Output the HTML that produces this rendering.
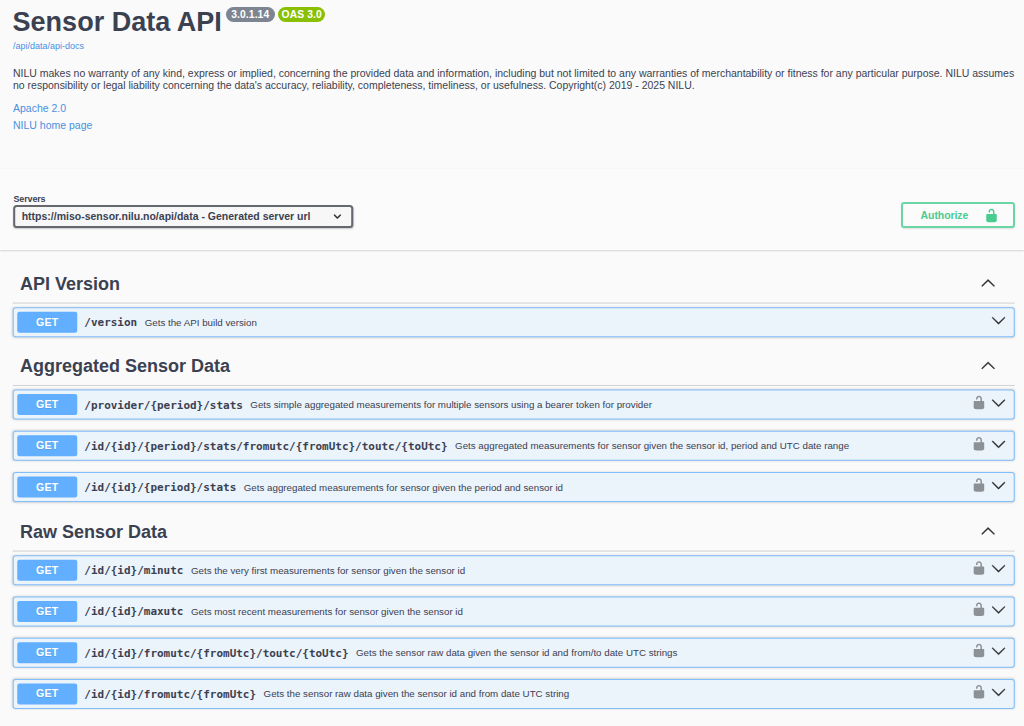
<!DOCTYPE html>
<html lang="en"><head><meta charset="utf-8"><title>Sensor Data API</title>
<style>
*{box-sizing:border-box}
html,body{margin:0;padding:0}
body{width:1024px;height:726px;overflow:hidden;background:#fafafa;font-family:"Liberation Sans",sans-serif;color:#3b4151;position:relative}
a{text-decoration:none;color:#4990e2}
.abs{position:absolute}
.t0{position:absolute;left:0;top:0}
.title{left:13px;top:8px;transform:translate(-.4px,-.6px);font-size:27px;font-weight:700;line-height:31px;margin:0;white-space:nowrap}
.badge{position:absolute;top:6.8px;height:14.8px;border-radius:8px;color:#fff;font-size:10.3px;font-weight:700;line-height:14.8px;padding-top:1px;letter-spacing:.1px;text-align:center;white-space:nowrap}
.badge.v{left:225.6px;width:49.3px;background:#7d8492}
.badge.o{left:278.3px;width:46.8px;background:#89bf04}
.url{left:13px;top:40.4px;transform:translate(0,.5px);font-size:9px;line-height:11px;white-space:nowrap}
.desc{left:13px;top:67.5px;width:1011px;font-size:10.49px;line-height:12px;margin:0;white-space:nowrap}
.lnk{left:13px;font-size:10.5px;line-height:12px;white-space:nowrap}
.scheme{left:0;top:168px;width:1024px;height:82px;background:#fbfbfb;border-top:1px solid #f7f7f6;box-shadow:0 1px 1.5px 0 rgba(0,0,0,.15)}
.servers-t{left:13.5px;top:194px;transform:translateY(.4px);font-size:9px;letter-spacing:-.15px;font-weight:700;line-height:11px}
.select{left:13px;top:205px;width:340px;transform:translate(.2px,0);height:23px;border:2px solid rgba(65,68,78,.8);border-radius:3.5px;background:#f7f7f7;box-shadow:0 1px 1.5px 0 rgba(0,0,0,.2);font-size:10.5px;font-weight:700;line-height:19px;padding-left:6.5px;white-space:nowrap}
.select span{display:inline-block;transform:translateY(.4px)}
.select svg{position:absolute;left:0;top:0;transform:translate(314.7px,1.9px);width:15px;height:15px;fill:#1f1f1f;stroke:#1f1f1f;stroke-width:.5px}
.auth{left:901px;top:202px;width:114px;height:26px;border:2px solid rgba(73,204,144,.8);border-radius:3px;color:#49cc90;font-size:10.5px;font-weight:700;box-shadow:0 1px 1.5px rgba(0,0,0,.1)}
.auth span{position:absolute;left:17.6px;top:5.4px;line-height:12px;letter-spacing:-.08px}
.auth svg{position:absolute;left:81px;top:3.6px;width:15px;height:15px;fill:#49cc90}
.tagline{width:1002px;height:1px;background:rgba(59,65,81,.225)}
.tagt{margin:0;font-size:18px;font-weight:700;line-height:21px;white-space:nowrap}
svg.up{width:15px;height:15px;fill:#2b2b30;stroke:#2b2b30;stroke-width:.5px}
.op{width:1002px;height:30px;border:1px solid rgba(97,175,254,.78);border-radius:3px;background:#ebf3fb;box-shadow:0 0 2.25px rgba(0,0,0,.16)}
.op .m{position:absolute;left:0;top:0;transform:translate(3.5px,3.5px);width:60px;padding-left:.2px;letter-spacing:.3px;height:21px;border-radius:2.25px;background:#61affe;color:#fff;font-size:10.5px;font-weight:700;line-height:21px;text-align:center;text-shadow:0 .75px 0 rgba(0,0,0,.1)}
.op .row{position:absolute;left:0;top:0;transform:translate(70.6px,0px);height:28px;display:flex;align-items:center;white-space:nowrap}
.op .p{font-family:"DejaVu Sans Mono","Liberation Mono",monospace;font-size:10.97px;font-weight:700;color:#3b4151}
.op .d{font-size:9.75px;margin-left:7.5px;color:#3b4151;transform:translateY(-.5px)}
.op svg.ar{position:absolute;left:0;top:0;transform:translate(977.3px,4.6px);width:15px;height:15px;fill:#2b2b30;stroke:#2b2b30;stroke-width:.5px}
.op svg.lk{position:absolute;left:0;top:0;transform:translate(957.7px,4.3px);width:15px;height:15px;fill:#000;opacity:.4}
</style></head>
<body>
<h2 class="abs title">Sensor Data API</h2>
<div class="badge v">3.0.1.14</div><div class="badge o">OAS 3.0</div>
<a class="abs url">/api/data/api-docs</a>
<p class="abs desc">NILU makes no warranty of any kind, express or implied, concerning the provided data and information, including but not limited to any warranties of merchantability or fitness for any particular purpose. NILU assumes<br>no responsibility or legal liability concerning the data's accuracy, reliability, completeness, timeliness, or usefulness. Copyright(c) 2019 - 2025 NILU.</p>
<a class="abs lnk" style="top:102px">Apache 2.0</a>
<a class="abs lnk" style="top:119px">NILU home page</a>
<div class="abs scheme"></div>
<div class="abs servers-t">Servers</div>
<div class="abs select"><span>https://miso-sensor.nilu.no/api/data - Generated server url</span><svg viewBox="0 0 20 20"><path d="M13.418 7.859a.695.695 0 0 1 .978 0 .68.68 0 0 1 0 .969l-3.908 3.83a.697.697 0 0 1-.979 0l-3.908-3.83a.68.68 0 0 1 0-.969.695.695 0 0 1 .978 0L10 11l3.418-3.141z"/></svg></div>
<div class="abs auth"><span>Authorize</span><svg viewBox="0 0 20 20"><path d="M15.8 8H14V5.6C14 2.703 12.665 1 10 1 7.334 1 6 2.703 6 5.6V6h2v-.801C8 3.754 8.797 3 10 3c1.203 0 2 .754 2 2.199V8H4c-.553 0-1 .646-1 1.199V17c0 .549.428 1.139.951 1.307l1.197.387C5.672 18.861 6.55 19 7.1 19h5.8c.549 0 1.428-.139 1.951-.307l1.196-.387c.524-.167.953-.757.953-1.306V9.199C17 8.646 16.352 8 15.8 8z"/></svg></div>
<h3 class="t0 tagt" style="transform:translate(20.05px,273.90px)">API Version</h3>
<svg class="t0 up" style="transform:translate(980.60px,275.15px)" viewBox="0 0 20 20"><path d="M 17.418 14.908 C 17.69 15.176 18.127 15.176 18.397 14.908 C 18.667 14.64 18.668 14.207 18.397 13.939 L 10.489 6.109 C 10.219 5.841 9.782 5.841 9.51 6.109 L 1.602 13.939 C 1.332 14.207 1.332 14.64 1.602 14.908 C 1.873 15.176 2.311 15.176 2.581 14.908 L 10 7.767 L 17.418 14.908 Z"/></svg>
<div class="t0 tagline" style="transform:translate(12.75px,302.58px)"></div>
<div class="t0 op" style="transform:translate(12.75px,307.20px)"><span class="m">GET</span><div class="row"><span class="p">/version</span><span class="d">Gets the API build version</span></div><svg class="ar" viewBox="0 0 20 20"><path d="M17.418 6.109c.272-.268.709-.268.979 0s.271.701 0 .969l-7.908 7.83c-.27.268-.707.268-.979 0l-7.908-7.83c-.27-.268-.27-.701 0-.969.271-.268.709-.268.979 0L10 13.25l7.418-7.141z"/></svg></div>
<h3 class="t0 tagt" style="transform:translate(20.05px,356.30px)">Aggregated Sensor Data</h3>
<svg class="t0 up" style="transform:translate(980.60px,357.55px)" viewBox="0 0 20 20"><path d="M 17.418 14.908 C 17.69 15.176 18.127 15.176 18.397 14.908 C 18.667 14.64 18.668 14.207 18.397 13.939 L 10.489 6.109 C 10.219 5.841 9.782 5.841 9.51 6.109 L 1.602 13.939 C 1.332 14.207 1.332 14.64 1.602 14.908 C 1.873 15.176 2.311 15.176 2.581 14.908 L 10 7.767 L 17.418 14.908 Z"/></svg>
<div class="t0 tagline" style="transform:translate(12.75px,384.98px)"></div>
<div class="t0 op" style="transform:translate(12.75px,389.60px)"><span class="m">GET</span><div class="row"><span class="p">/provider/{period}/stats</span><span class="d">Gets simple aggregated measurements for multiple sensors using a bearer token for provider</span></div><svg class="lk" viewBox="0 0 20 20"><path d="M15.8 8H14V5.6C14 2.703 12.665 1 10 1 7.334 1 6 2.703 6 5.6V6h2v-.801C8 3.754 8.797 3 10 3c1.203 0 2 .754 2 2.199V8H4c-.553 0-1 .646-1 1.199V17c0 .549.428 1.139.951 1.307l1.197.387C5.672 18.861 6.55 19 7.1 19h5.8c.549 0 1.428-.139 1.951-.307l1.196-.387c.524-.167.953-.757.953-1.306V9.199C17 8.646 16.352 8 15.8 8z"/></svg><svg class="ar" viewBox="0 0 20 20"><path d="M17.418 6.109c.272-.268.709-.268.979 0s.271.701 0 .969l-7.908 7.83c-.27.268-.707.268-.979 0l-7.908-7.83c-.27-.268-.27-.701 0-.969.271-.268.709-.268.979 0L10 13.25l7.418-7.141z"/></svg></div>
<div class="t0 op" style="transform:translate(12.75px,430.85px)"><span class="m">GET</span><div class="row"><span class="p">/id/{id}/{period}/stats/fromutc/{fromUtc}/toutc/{toUtc}</span><span class="d">Gets aggregated measurements for sensor given the sensor id, period and UTC date range</span></div><svg class="lk" viewBox="0 0 20 20"><path d="M15.8 8H14V5.6C14 2.703 12.665 1 10 1 7.334 1 6 2.703 6 5.6V6h2v-.801C8 3.754 8.797 3 10 3c1.203 0 2 .754 2 2.199V8H4c-.553 0-1 .646-1 1.199V17c0 .549.428 1.139.951 1.307l1.197.387C5.672 18.861 6.55 19 7.1 19h5.8c.549 0 1.428-.139 1.951-.307l1.196-.387c.524-.167.953-.757.953-1.306V9.199C17 8.646 16.352 8 15.8 8z"/></svg><svg class="ar" viewBox="0 0 20 20"><path d="M17.418 6.109c.272-.268.709-.268.979 0s.271.701 0 .969l-7.908 7.83c-.27.268-.707.268-.979 0l-7.908-7.83c-.27-.268-.27-.701 0-.969.271-.268.709-.268.979 0L10 13.25l7.418-7.141z"/></svg></div>
<div class="t0 op" style="transform:translate(12.75px,472.10px)"><span class="m">GET</span><div class="row"><span class="p">/id/{id}/{period}/stats</span><span class="d">Gets aggregated measurements for sensor given the period and sensor id</span></div><svg class="lk" viewBox="0 0 20 20"><path d="M15.8 8H14V5.6C14 2.703 12.665 1 10 1 7.334 1 6 2.703 6 5.6V6h2v-.801C8 3.754 8.797 3 10 3c1.203 0 2 .754 2 2.199V8H4c-.553 0-1 .646-1 1.199V17c0 .549.428 1.139.951 1.307l1.197.387C5.672 18.861 6.55 19 7.1 19h5.8c.549 0 1.428-.139 1.951-.307l1.196-.387c.524-.167.953-.757.953-1.306V9.199C17 8.646 16.352 8 15.8 8z"/></svg><svg class="ar" viewBox="0 0 20 20"><path d="M17.418 6.109c.272-.268.709-.268.979 0s.271.701 0 .969l-7.908 7.83c-.27.268-.707.268-.979 0l-7.908-7.83c-.27-.268-.27-.701 0-.969.271-.268.709-.268.979 0L10 13.25l7.418-7.141z"/></svg></div>
<h3 class="t0 tagt" style="transform:translate(20.05px,521.90px)">Raw Sensor Data</h3>
<svg class="t0 up" style="transform:translate(980.60px,523.15px)" viewBox="0 0 20 20"><path d="M 17.418 14.908 C 17.69 15.176 18.127 15.176 18.397 14.908 C 18.667 14.64 18.668 14.207 18.397 13.939 L 10.489 6.109 C 10.219 5.841 9.782 5.841 9.51 6.109 L 1.602 13.939 C 1.332 14.207 1.332 14.64 1.602 14.908 C 1.873 15.176 2.311 15.176 2.581 14.908 L 10 7.767 L 17.418 14.908 Z"/></svg>
<div class="t0 tagline" style="transform:translate(12.75px,550.58px)"></div>
<div class="t0 op" style="transform:translate(12.75px,555.20px)"><span class="m">GET</span><div class="row"><span class="p">/id/{id}/minutc</span><span class="d">Gets the very first measurements for sensor given the sensor id</span></div><svg class="lk" viewBox="0 0 20 20"><path d="M15.8 8H14V5.6C14 2.703 12.665 1 10 1 7.334 1 6 2.703 6 5.6V6h2v-.801C8 3.754 8.797 3 10 3c1.203 0 2 .754 2 2.199V8H4c-.553 0-1 .646-1 1.199V17c0 .549.428 1.139.951 1.307l1.197.387C5.672 18.861 6.55 19 7.1 19h5.8c.549 0 1.428-.139 1.951-.307l1.196-.387c.524-.167.953-.757.953-1.306V9.199C17 8.646 16.352 8 15.8 8z"/></svg><svg class="ar" viewBox="0 0 20 20"><path d="M17.418 6.109c.272-.268.709-.268.979 0s.271.701 0 .969l-7.908 7.83c-.27.268-.707.268-.979 0l-7.908-7.83c-.27-.268-.27-.701 0-.969.271-.268.709-.268.979 0L10 13.25l7.418-7.141z"/></svg></div>
<div class="t0 op" style="transform:translate(12.75px,596.45px)"><span class="m">GET</span><div class="row"><span class="p">/id/{id}/maxutc</span><span class="d">Gets most recent measurements for sensor given the sensor id</span></div><svg class="lk" viewBox="0 0 20 20"><path d="M15.8 8H14V5.6C14 2.703 12.665 1 10 1 7.334 1 6 2.703 6 5.6V6h2v-.801C8 3.754 8.797 3 10 3c1.203 0 2 .754 2 2.199V8H4c-.553 0-1 .646-1 1.199V17c0 .549.428 1.139.951 1.307l1.197.387C5.672 18.861 6.55 19 7.1 19h5.8c.549 0 1.428-.139 1.951-.307l1.196-.387c.524-.167.953-.757.953-1.306V9.199C17 8.646 16.352 8 15.8 8z"/></svg><svg class="ar" viewBox="0 0 20 20"><path d="M17.418 6.109c.272-.268.709-.268.979 0s.271.701 0 .969l-7.908 7.83c-.27.268-.707.268-.979 0l-7.908-7.83c-.27-.268-.27-.701 0-.969.271-.268.709-.268.979 0L10 13.25l7.418-7.141z"/></svg></div>
<div class="t0 op" style="transform:translate(12.75px,637.70px)"><span class="m">GET</span><div class="row"><span class="p">/id/{id}/fromutc/{fromUtc}/toutc/{toUtc}</span><span class="d">Gets the sensor raw data given the sensor id and from/to date UTC strings</span></div><svg class="lk" viewBox="0 0 20 20"><path d="M15.8 8H14V5.6C14 2.703 12.665 1 10 1 7.334 1 6 2.703 6 5.6V6h2v-.801C8 3.754 8.797 3 10 3c1.203 0 2 .754 2 2.199V8H4c-.553 0-1 .646-1 1.199V17c0 .549.428 1.139.951 1.307l1.197.387C5.672 18.861 6.55 19 7.1 19h5.8c.549 0 1.428-.139 1.951-.307l1.196-.387c.524-.167.953-.757.953-1.306V9.199C17 8.646 16.352 8 15.8 8z"/></svg><svg class="ar" viewBox="0 0 20 20"><path d="M17.418 6.109c.272-.268.709-.268.979 0s.271.701 0 .969l-7.908 7.83c-.27.268-.707.268-.979 0l-7.908-7.83c-.27-.268-.27-.701 0-.969.271-.268.709-.268.979 0L10 13.25l7.418-7.141z"/></svg></div>
<div class="t0 op" style="transform:translate(12.75px,678.95px)"><span class="m">GET</span><div class="row"><span class="p">/id/{id}/fromutc/{fromUtc}</span><span class="d">Gets the sensor raw data given the sensor id and from date UTC string</span></div><svg class="lk" viewBox="0 0 20 20"><path d="M15.8 8H14V5.6C14 2.703 12.665 1 10 1 7.334 1 6 2.703 6 5.6V6h2v-.801C8 3.754 8.797 3 10 3c1.203 0 2 .754 2 2.199V8H4c-.553 0-1 .646-1 1.199V17c0 .549.428 1.139.951 1.307l1.197.387C5.672 18.861 6.55 19 7.1 19h5.8c.549 0 1.428-.139 1.951-.307l1.196-.387c.524-.167.953-.757.953-1.306V9.199C17 8.646 16.352 8 15.8 8z"/></svg><svg class="ar" viewBox="0 0 20 20"><path d="M17.418 6.109c.272-.268.709-.268.979 0s.271.701 0 .969l-7.908 7.83c-.27.268-.707.268-.979 0l-7.908-7.83c-.27-.268-.27-.701 0-.969.271-.268.709-.268.979 0L10 13.25l7.418-7.141z"/></svg></div>
</body></html>
